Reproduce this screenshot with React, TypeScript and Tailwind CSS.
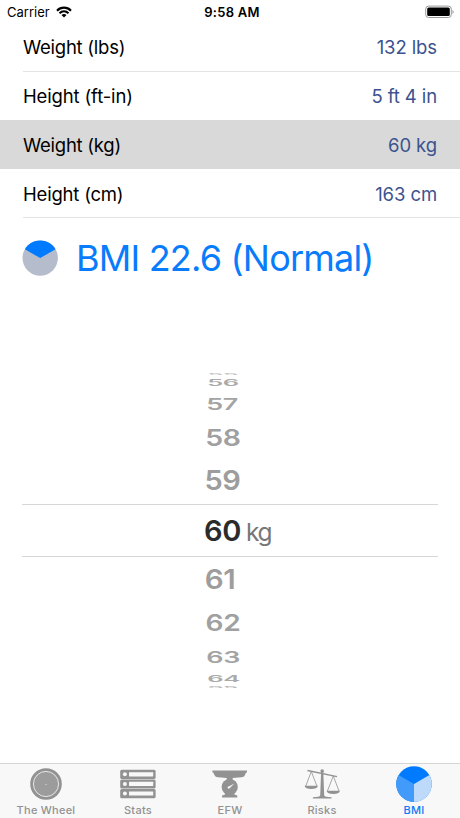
import React from "react";

type Field = { label: string; value: string; selected?: boolean; row: string; line: string; tracking: string };

const fields: Field[] = [
  { label: "Weight (lbs)", value: "132 lbs", row: "h-[49px]", line: "pt-[2px] border-b border-[#e4e4e6]", tracking: "tracking-[-0.25px]" },
  { label: "Height (ft-in)", value: "5 ft 4 in", row: "h-[48px]", line: "pt-px", tracking: "tracking-[-0.15px]" },
  { label: "Weight (kg)", value: "60 kg", selected: true, row: "h-[49px] bg-[#d9d9d9]", line: "pt-[3px]", tracking: "tracking-[-0.25px]" },
  { label: "Height (cm)", value: "163 cm", row: "h-[49px]", line: "pt-[3px] border-b border-[#e4e4e6]", tracking: "tracking-[-0.2px]" },
];

function StatusBar() {
  return (
    <header className="grid h-6 shrink-0 grid-cols-3 items-center pl-[7px] pr-[5px] text-[13px] leading-6 text-black">
      <div className="flex items-center gap-[6px]">
        <span>Carrier</span>
        <svg className="-mt-px" width="16" height="12" viewBox="0 0 16 12" fill="none" stroke="#000" strokeWidth="2.2">
          <path d="M1 4.7C5 .7 11 .7 15 4.7" />
          <path d="M3.5 7.3C6.2 4.8 9.8 4.8 12.5 7.3" />
          <path d="M8 11.4 5.5 8.9Q8 7 10.5 8.9Z" fill="#000" stroke="none" />
        </svg>
      </div>
      <div className="pl-[2px] text-center font-semibold tracking-[0.25px]">9:58 AM</div>
      <svg className="-mt-px justify-self-end" width="30" height="14" viewBox="0 0 30 14">
        <rect x=".7" y="1.1" width="25.6" height="11.4" rx="3" fill="none" stroke="#999" />
        <rect x="2.2" y="2.6" width="22.6" height="8.4" rx="1.5" fill="#000" />
        <path d="M27.5 5v4Q30 7 27.5 5" fill="#999" />
      </svg>
    </header>
  );
}

function FieldRow({ field }: { field: Field }) {
  return (
    <div className={`shrink-0 pl-[23px] ${field.row}`}>
      <div className={`flex h-full items-center justify-between pr-[23px] text-[18.5px] ${field.line}`}>
        <span className={`text-black ${field.tracking}`}>{field.label}</span>
        <span className="tracking-[-0.1px] text-[#3b5390]">{field.value}</span>
      </div>
    </div>
  );
}

const above = [
  { n: 55, row: "h-[2px]", text: "scale-x-[0.86] scale-y-[0.07] text-[#c4c4c4]" },
  { n: 56, row: "h-[15px]", text: "scale-x-[0.88] scale-y-[0.3] text-[#aaa]" },
  { n: 57, row: "h-[28px]", text: "scale-x-[0.93] scale-y-[0.56] text-[#a4a4a4]" },
  { n: 58, row: "h-[40px]", text: "scale-x-[0.98] scale-y-[0.78] text-[#a0a0a0]" },
  { n: 59, row: "h-[46px]", text: "scale-y-[0.94] text-[#9d9d9d]" },
];
const below = [
  { n: 61, row: "h-[46px]", text: "scale-x-[1.02] scale-y-[0.94] text-[#9d9d9d]" },
  { n: 62, row: "h-[40px]", text: "scale-x-[0.97] scale-y-[0.78] text-[#a0a0a0]" },
  { n: 63, row: "h-[28px]", text: "scale-x-[0.93] scale-y-[0.56] text-[#a4a4a4]" },
  { n: 64, row: "h-[15px]", text: "scale-x-[0.88] scale-y-[0.3] text-[#aaa]" },
  { n: 65, row: "h-[2px]", text: "scale-x-[0.82] scale-y-[0.07] text-[#b5b5b5]" },
];

function WheelRow({ n, row, text }: { n: number; row: string; text: string }) {
  return (
    <div className={`flex items-center pl-[204.5px] ${row}`}>
      <span className={`shrink-0 text-[29px] leading-[36px] font-semibold tracking-[-0.4px] ${text}`}>{n}</span>
    </div>
  );
}

function Picker() {
  return (
    <section className="mt-[91px] shrink-0">
      {above.map((r) => <WheelRow key={r.n} {...r} />)}
      <div className="mx-[22px] flex h-[53px] items-center border-y border-[#d7d7d7] pl-[182px]">
        <span className="text-[29px] leading-9 font-semibold tracking-[-0.4px] text-[#2b2b2b]">60</span>
        <span className="ml-[5px] pt-[2px] text-[24.5px] leading-9 tracking-[-1.2px] text-[#777]">kg</span>
      </div>
      {below.map((r) => <WheelRow key={r.n} {...r} />)}
    </section>
  );
}

function WheelIcon() {
  return (
    <svg width="36" height="36" viewBox="0 0 36 36">
      <circle cx="18" cy="18" r="15.8" fill="#929292" />
      <circle cx="18" cy="18" r="12.6" fill="#9c9c9c" stroke="#eee" strokeWidth=".9" />
      <circle cx="18" cy="18.5" r=".6" fill="#eee" />
    </svg>
  );
}

function StatsIcon() {
  return (
    <svg width="36" height="36" viewBox="0 0 36 36">
      {[3.8, 13.4, 23].map((y) => (
        <g key={y}>
          <rect x=".2" y={y} width="35.4" height="9.2" rx="1.5" fill="#929292" />
          <circle cx="4.9" cy={y + 4.5} r="2" fill="#f8f8f8" />
          <rect x="9" y={y + 2.4} width="24.2" height="4.2" rx=".4" fill="#f8f8f8" />
        </g>
      ))}
    </svg>
  );
}

function ScaleIcon() {
  return (
    <svg width="36" height="36" viewBox="0 0 36 36" fill="#929292">
      <path d="M.4 4.6H35V6.6H34.1L32.7 9.6Q32.1 11 29.5 11.3L20.6 12V14.5H14.8V12L5.9 11.3Q3.3 11 2.7 9.6L1.3 6.6H.4Z" />
      <circle cx="17.7" cy="21.1" r="8.1" />
      <path d="M13 26.5H22.4V28.5L25.3 29.6V31.4H10.1V29.6L13 28.5Z" />
      <path d="M22.4 17.4 17.6 22.3 16 20.9Z" fill="#fafafa" />
      <circle cx="16.7" cy="21.6" r="1.1" fill="#fafafa" />
    </svg>
  );
}

function BalanceIcon() {
  return (
    <svg width="36" height="36" viewBox="0 0 36 36" fill="none" stroke="#929292">
      <path d="M3.5 4.5 33 10.7" strokeWidth="1.3" />
      <path d="M7.3 5.5 1.8 20M7.3 5.5 12.9 20M29.3 10 23.4 25M29.3 10 35 25" strokeWidth=".8" />
      <path d="M.6 19.7H14Q13.2 23 7.3 23Q1.4 23 .6 19.7ZM22.6 24.8H36Q35.2 28 29.3 28Q23.4 28 22.6 24.8Z" fill="#929292" stroke="none" />
      <circle cx="18.2" cy="5" r="1.8" fill="#929292" stroke="none" />
      <path d="M17.1 6H19.3L20.2 29.5Q20.7 31 27.5 31.2V32.6H8.9V31.2Q15.7 31 16.2 29.5Z" fill="#929292" stroke="none" />
    </svg>
  );
}

function BmiIcon() {
  return (
    <svg width="36" height="36" viewBox="0 0 36 36">
      <circle cx="18" cy="18" r="17.8" fill="#007aff" />
      <path d="M18 18V35.8A17.8 17.8 0 0 1 2.6 9.1Z" fill="#429bfa" />
      <path d="M18 18V35.8A17.8 17.8 0 0 0 33.4 9.1Z" fill="#bddafb" />
    </svg>
  );
}

const tabs = [
  { label: "The Wheel", icon: <WheelIcon /> },
  { label: "Stats", icon: <StatsIcon /> },
  { label: "EFW", icon: <ScaleIcon /> },
  { label: "Risks", icon: <BalanceIcon /> },
  { label: "BMI", icon: <BmiIcon />, active: true },
];

export default function App() {
  return (
    <div className="flex h-[818px] w-[460px] flex-col overflow-hidden bg-white font-['Inter','Liberation_Sans',sans-serif]">
      <StatusBar />
      <main className="flex min-h-0 flex-1 flex-col">
        <div className="-mt-px">
          {fields.map((f) => <FieldRow key={f.label} field={f} />)}
        </div>
        <div className="mt-4 flex h-12 shrink-0 items-center gap-[17px] pl-[22px]">
          <svg width="37" height="37" viewBox="0 0 37 37">
            <circle cx="18.2" cy="18.1" r="17.7" fill="#b5bdcc" />
            <path d="M18.2 18.1 2.9 9.25A17.7 17.7 0 0 1 33.5 9.25Z" fill="#007aff" />
          </svg>
          <h1 className="pt-px text-[36px] leading-[47px] tracking-[-0.8px] whitespace-nowrap text-[#087cfb]">BMI 22.6 (Normal)</h1>
        </div>
        <Picker />
      </main>
      <nav className="grid h-[55px] shrink-0 grid-cols-5 border-t border-[#d5d5d5] bg-[#f8f8f8]">
        {tabs.map((t) => (
          <div key={t.label} className={`flex flex-col items-center pt-[2px] text-[11px] leading-[14px] font-medium tracking-[0.25px] ${t.active ? "text-[#0a7cf8]" : "text-[#929292]"}`}>
            <span className="-ml-px">{t.icon}</span>
            <span className="mt-[1px]">{t.label}</span>
          </div>
        ))}
      </nav>
    </div>
  );
}
